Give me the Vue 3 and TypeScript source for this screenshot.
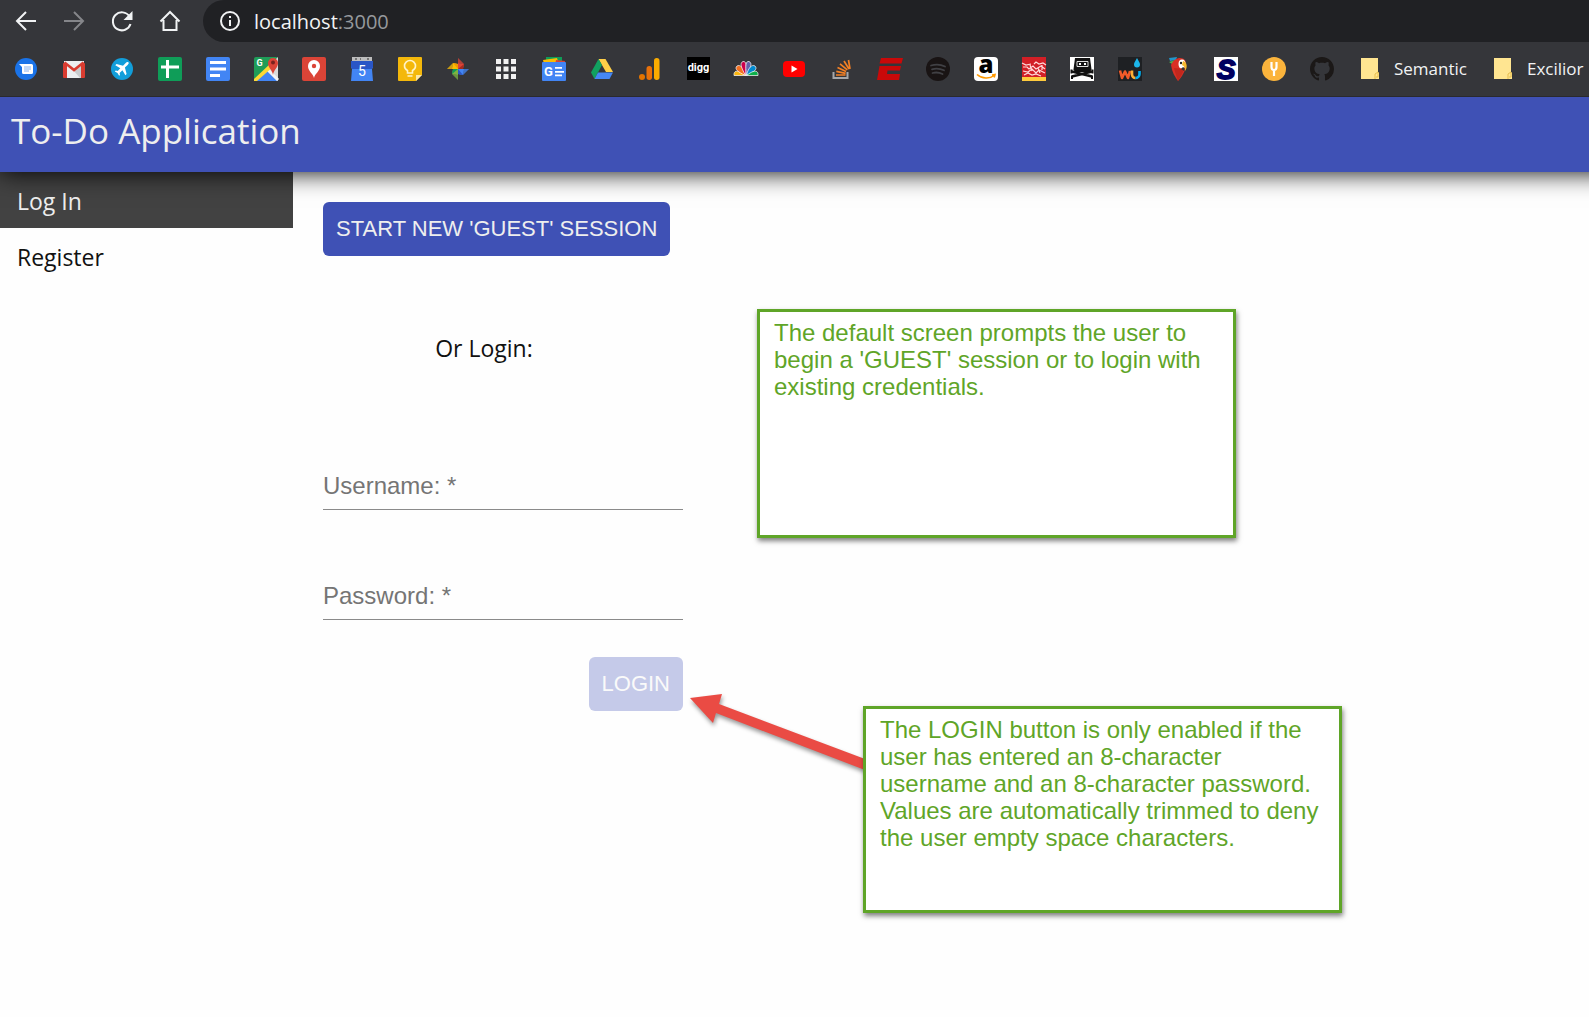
<script setup lang="ts">
import { computed, ref } from 'vue'

interface Bookmark {
  name: string
  art: string
}

const bookmarks: Bookmark[] = [
  {
    name: 'Messages',
    art: '<circle cx="12" cy="12" r="11" fill="#1a73e8"/><path d="M5 7h12.500a1.500 1.500 0 0 1 1.500 1.500v7a1.500 1.500 0 0 1-1.500 1.500h-8a1.500 1.500 0 0 1-1.500-1.500V10z" fill="#fff"/><path d="M10 10h7M10 12h7M10 14h5" stroke="#8ab4f0" stroke-width="1"/>',
  },
  {
    name: 'Gmail',
    art: '<path d="M2 4h20v17H2z" fill="#eceff1"/><path d="M12 14l9-6v13h-3z" fill="#c9ccce"/><path d="M1 6.500L3.500 5 5 7v14H2a1 1 0 0 1-1-1zM23 6.500L20.500 5 19 7v14h3a1 1 0 0 0 1-1z" fill="#d93c30"/><path d="M2.500 5.500L12 13l9.500-7.500" fill="none" stroke="#d93c30" stroke-width="2.600"/>',
  },
  {
    name: 'Flights',
    art: '<circle cx="12" cy="12" r="11" fill="#129eda"/><path d="M18.500 5.500c-.8-.8-2-.3-2.800.5l-2.700 2.700L6.500 7 5.300 8.200l5 3-2.600 2.800-2-.4-.9.900 2.700 1.600 1.600 2.700.9-.9-.4-2 2.800-2.600 3 5 1.200-1.200-1.700-6.500 2.700-2.700c.8-.8 1.600-1.900.9-2.400z" fill="#fff"/>',
  },
  {
    name: 'Sheets',
    art: '<rect width="24" height="24" rx="2" fill="#0f9d58"/><path d="M8 3h3v5.500h10v3H11V21H8v-9.500H3v-3h5z" fill="#fff"/>',
  },
  {
    name: 'Docs',
    art: '<rect width="24" height="24" rx="2" fill="#4285f4"/><path d="M4 4h16v3H4zM4 10.500h16v3H4zM4 17h10v3H4z" fill="#fff"/>',
  },
  {
    name: 'Maps',
    art: '<rect width="24" height="24" rx="2" fill="#1f9d58"/><path d="M12 12L24 0v24H12z" fill="#dadada"/><path d="M2 24l11-11 11 11z" fill="#4285f4"/><path d="M13 12l11 11" stroke="#f4f4f4" stroke-width="3"/><path d="M0 22L17 6l3 3L3 24H0z" fill="#fdd835"/><path d="M19 18c-.5-5-5-7-5-12a5 5 0 0 1 10 0c0 5-4.500 7-5 12z" fill="#db4437"/><circle cx="19" cy="5.500" r="2" fill="#7b231e"/><text x="2.500" y="9" font-family="Roboto, sans-serif" font-size="9" font-weight="700" fill="#fff">G</text>',
  },
  {
    name: 'Places',
    art: '<rect width="24" height="24" rx="2" fill="#db4437"/><path d="M12 21c-.7-4.500-6-6.500-6-12a6 6 0 0 1 12 0c0 5.500-5.300 7.500-6 12z" fill="#fff"/><circle cx="12" cy="9" r="2.200" fill="#db4437"/>',
  },
  {
    name: 'Calendar',
    art: '<path d="M2 0h20v5H2z" fill="#bdbdbd"/><path d="M5 1h2v2H5zM10 1h1v2h-1zM17 1h2v2h-2z" fill="#757575"/><path d="M1 4h22v6l-1 2 1 12H1l1-12-1-2z" fill="#4285f4"/><path d="M1 4h22v6l-1 2H2l-1-2z" fill="#2a56c6"/><text x="12" y="19" text-anchor="middle" font-family="Roboto, sans-serif" font-size="14" fill="#fff">5</text>',
  },
  {
    name: 'Keep',
    art: '<path d="M1 0h22a1 1 0 0 1 1 1v17l-6 6H1a1 1 0 0 1-1-1V1a1 1 0 0 1 1-1z" fill="#f4b80b"/><path d="M24 18h-6v6z" fill="#fce8a8"/><path d="M9.500 16v-2.500C7.500 12.500 6.500 11 6.500 9a5.500 5.500 0 0 1 11 0c0 2-1 3.500-3 4.500V16zM9.500 19h5" fill="none" stroke="#fff3c9" stroke-width="1.600"/>',
  },
  {
    name: 'Photos',
    art: '<path d="M12 1l6 6-1 5h-5z" fill="#db4437"/><path d="M23 12l-6 6-5-1v-5z" fill="#4285f4"/><path d="M12 23l-6-6 1-5h5z" fill="#7cb342"/><path d="M1 12l6-6 5 1v5z" fill="#fbbc04"/><path d="M12 12l5 0 1-5z" fill="#a52b20"/><path d="M12 12v5l5 1z" fill="#2a56c6"/><path d="M12 12H7l-1 5z" fill="#0f9d58"/><path d="M12 12V7L7 6z" fill="#f29900"/><path d="M1 12h5l1-3V6zM12 23v-5l-3-1H6zM23 12h-5l-1 3v3zM12 1v5l3 1h3z" fill="#35363a" opacity=".25"/>',
  },
  {
    name: 'Apps',
    art: '<path d="M2 2h5v5H2zM9.500 2h5v5h-5zM17 2h5v5h-5zM2 9.500h5v5H2zM9.500 9.500h5v5h-5zM17 9.500h5v5h-5zM2 17h5v5H2zM9.500 17h5v5h-5zM17 17h5v5h-5z" fill="#f1f1f1"/>',
  },
  {
    name: 'News',
    art: '<path d="M4 0h16v8H4z" fill="#0f9d58"/><path d="M1 3l14-2 2 6H2z" fill="#fbbc04"/><path d="M14 3l9 1-1 4h-9z" fill="#db4437"/><rect y="5" width="24" height="19" rx="1" fill="#4285f4"/><text x="2" y="19" font-family="Roboto, sans-serif" font-size="13" font-weight="700" fill="#fff">G</text><path d="M13 10h7v1.800h-7zM13 14h9v1.800h-9zM13 17.500h7v1.800h-7z" fill="#fff"/>',
  },
  {
    name: 'Drive',
    art: '<path d="M8.500 2h7L23 15h-7z" fill="#ffcf48"/><path d="M8.500 2l3.500 6-7.500 14L1 15.500z" fill="#11a160"/><path d="M8 15.500h15L19.500 22h-15z" fill="#4587f5"/>',
  },
  {
    name: 'Analytics',
    art: '<circle cx="4" cy="20" r="3" fill="#e37400"/><rect x="8.500" y="9" width="5.500" height="14" rx="2.700" fill="#e8710a"/><rect x="16" y="1" width="5.500" height="22" rx="2.700" fill="#f9ab00"/>',
  },
  {
    name: 'Digg',
    art: '<path d="M1 0h23v23H1z" fill="#000"/><text x="12.500" y="14" text-anchor="middle" font-family="Roboto, sans-serif" font-size="11" font-weight="700" fill="#fff">digg</text>',
  },
  {
    name: 'NBC',
    art: '<g stroke="#fff" stroke-width=".7"><path d="M11.500 18.500L0 18.500C-.5 13 4 12.500 11.500 18.500z" fill="#fcb711"/><path d="M11.500 18.500C4 15 0 12 3 9c3-2 7 2 8.500 9.500z" fill="#f37021"/><path d="M11.500 18.500C7 10 5.500 6 9 4.500c3-.5 4 3 2.500 14z" fill="#cc004c"/><path d="M12.500 18.500C17 10 18.500 6 15 4.500c-3-.5-4 3-2.500 14z" fill="#6460aa"/><path d="M12.500 18.500C20 15 24 12 21 9c-3-2-7 2-8.500 9.500z" fill="#0089d0"/><path d="M12.500 18.500L24 18.500C24.500 13 20 12.500 12.500 18.500z" fill="#0db14b"/></g>',
  },
  {
    name: 'YouTube',
    art: '<rect x="1" y="4" width="22" height="16" rx="4" fill="#f00"/><path d="M9.500 8.500l6 3.500-6 3.500z" fill="#fff"/>',
  },
  {
    name: 'Stack Overflow',
    art: '<path d="M3.500 15v6h14v-6" fill="none" stroke="#a5a7aa" stroke-width="2"/><path d="M6 18h9.500M6.300 14.300l9.300 2M7.500 10.500l8.600 4M10 6.800l7.300 6M14 4l5 8M18.500 3l1.500 9" stroke="#f48024" stroke-width="1.700"/>',
  },
  {
    name: 'Escapist',
    art: '<path d="M3 1h22l-1.500 5.500H1.500zM1.500 9H23l-1 4.500H9.500L9 17h13l-1 6H-1z" fill="#c90909"/>',
  },
  {
    name: 'Spotify',
    art: '<circle cx="12" cy="12" r="12" fill="#191414"/><path d="M5 8.500c5-1.500 10-1 14 1M6 12.300c4-1.200 8-.8 12 1M6.500 16c4-1 7-.5 10 1" fill="none" stroke="#404044" stroke-width="1.800" stroke-linecap="round"/>',
  },
  {
    name: 'Amazon',
    art: '<rect width="24" height="24" rx="4" fill="#fff"/><text x="12" y="16" text-anchor="middle" font-family="Open Sans, sans-serif" font-size="24" font-weight="800" fill="#000">a</text><path d="M3 17.500c5 4.500 13 4.500 17 1M18 18l3-.5-.8 3" fill="none" stroke="#f90" stroke-width="1.600"/>',
  },
  {
    name: 'Recipes',
    art: '<path d="M0 0h24v20H0z" fill="#d21f26"/><path d="M0 20h24v4H0z" fill="#ffcb3d"/><path d="M0 6l4 2 5-1M12 7l2-2 3 2 4-1 3 2M1 10h4l2 2 4-3 3 3 5-3 4 3M1 14l5 1 4-3 4 4 3-3 6 3M2 18l4-2 4 2 4-1 5 2M16 11l2 5M8 8l2 6M20 8v5" fill="none" stroke="#ffdada" stroke-width="1.200"/>',
  },
  {
    name: 'Pirate radio',
    art: '<path d="M0 0h24v24H0z" fill="#fff"/><path d="M5 1h15l1.500 11.500L20 15H5l-1.500-2.500z" fill="#111"/><path d="M7 4.500h11v5H7z" fill="none" stroke="#ddd" stroke-width="1"/><path d="M9 6h2v2H9zM14 6h2v2h-2z" fill="#fff"/><path d="M2 14.500l20 5M22 14.500l-20 5" stroke="#111" stroke-width="2.600"/><path d="M1.500 12.500v4M22.500 12.500v4M2 18.500v3.500M22 18.500v3.500" stroke="#111" stroke-width="2"/>',
  },
  {
    name: 'Weather Underground',
    art: '<path d="M0 0h24v24H0z" fill="#1e2023"/><path d="M2 13.500l2 7.500 3-6.500 3 6.500 2-7" fill="none" stroke="#f15a29" stroke-width="2.600" stroke-linejoin="round"/><path d="M14 13.500v4a3.500 3.500 0 0 0 3.500 3.500" fill="none" stroke="#fbb034" stroke-width="2.600"/><path d="M17.500 21a4 4 0 0 0 4-4v-3" fill="none" stroke="#00aeef" stroke-width="2.600"/><path d="M19 1c1.500 3 3 4.500 3 6.500a3 3 0 0 1-6 0C16 5.500 17.500 4 19 1z" fill="#1cb5ea"/>',
  },
  {
    name: 'Parrot',
    art: '<path d="M3 1l8-1-1 3-6 1z" fill="#2196c9"/><path d="M3 5l6-2v4L6 7z" fill="#4caf50"/><path d="M5 8C8 0 17-1 19.500 4c2 6-2 14-7.500 20-3-4-6-9-7-16z" fill="#d93025"/><path d="M8 11c1 5 3 9 4 13 3-5 5-8 6-12z" fill="#c2271d"/><ellipse cx="16" cy="7" rx="3.500" ry="4.500" fill="#fff"/><circle cx="15" cy="6" r="1.200" fill="#222"/><path d="M17 4c4 1 5 6 2 10 0-4-1-5-3-6z" fill="#f5b82e"/><path d="M17 10c2 1 2 2 1 4l-3-2z" fill="#333"/>',
  },
  {
    name: 'Slashdot',
    art: '<path d="M0 0h24v24H0z" fill="#fff"/><text x="12" y="22" text-anchor="middle" font-family="Liberation Sans, sans-serif" font-size="28" font-style="italic" font-weight="700" fill="#000060" stroke="#000060" stroke-width="1.800">S</text>',
  },
  {
    name: 'Tuning fork',
    art: '<circle cx="12" cy="12" r="12" fill="#fbb43c"/><path d="M9.500 5v5a2.500 3 0 0 0 5 0V5M12 12.500V19" fill="none" stroke="#fff" stroke-width="2.200"/>',
  },
  {
    name: 'GitHub',
    art: '<path d="M12 0C5.370 0 0 5.370 0 12c0 5.310 3.435 9.795 8.205 11.385.6.105.825-.255.825-.57 0-.285-.015-1.230-.015-2.235-3.015.555-3.795-.735-4.035-1.410-.135-.345-.72-1.410-1.230-1.695-.42-.225-1.020-.78-.015-.795.945-.015 1.620.87 1.845 1.230 1.080 1.815 2.805 1.305 3.495.99.105-.78.42-1.305.765-1.605-2.670-.3-5.460-1.335-5.460-5.925 0-1.305.465-2.385 1.230-3.225-.12-.3-.54-1.530.12-3.180 0 0 1.005-.315 3.300 1.230.96-.27 1.980-.405 3-.405s2.040.135 3 .405c2.295-1.560 3.300-1.230 3.300-1.230.66 1.650.24 2.880.12 3.180.765.84 1.230 1.905 1.230 3.225 0 4.605-2.805 5.625-5.475 5.925.435.375.81 1.095.81 2.220 0 1.605-.015 2.895-.015 3.300 0 .315.225.69.825.57A12.020 12.020 0 0 0 24 12c0-6.630-5.370-12-12-12z" fill="#1b1817"/>',
  },
]

const folders = ['Semantic', 'Excilior']

const username = ref('')
const password = ref('')
const canLogin = computed(
  () => username.value.trim().length >= 8 && password.value.trim().length >= 8,
)
</script>

<template>
  <div class="page">
    <div class="browser">
      <div class="toolbar">
        <div class="nav-buttons">
          <button type="button" aria-label="Back">
            <svg viewBox="0 0 24 24"><path d="M22 12H3M12 3l-9 9 9 9" /></svg>
          </button>
          <button type="button" aria-label="Forward" class="dim">
            <svg viewBox="0 0 24 24"><path d="M2 12h19M12 3l9 9-9 9" /></svg>
          </button>
          <button type="button" aria-label="Reload">
            <svg viewBox="0 0 24 24">
              <path d="M19.500 7.500A9 9 0 1 0 20.500 15" />
              <path d="M22.500 2v9h-9z" class="solid" />
            </svg>
          </button>
          <button type="button" aria-label="Home">
            <svg viewBox="0 0 24 24"><path d="M2.500 12.500L12 3l9.500 9.500M5.500 11v10h13V11" /></svg>
          </button>
        </div>
        <div class="omnibox">
          <svg viewBox="0 0 24 24" aria-hidden="true">
            <circle cx="12" cy="12" r="9" />
            <path d="M12 11v6M12 7v2" />
          </svg>
          <span>localhost<span class="port">:3000</span></span>
        </div>
      </div>
      <nav class="bookmarks" aria-label="Bookmarks">
        <a v-for="b in bookmarks" :key="b.name" href="#" :aria-label="b.name">
          <svg viewBox="0 0 24 24" v-html="b.art"></svg>
        </a>
        <a v-for="f in folders" :key="f" href="#" class="folder">
          <svg viewBox="0 0 24 24" aria-hidden="true">
            <path d="M3 1h17v14l1 1v6H3z" fill="#ffe591" />
            <path d="M17 22v-5l3-2v5h-2" fill="none" stroke="#e6bd4d" stroke-width="1" />
          </svg>
          <span>{{ f }}</span>
        </a>
      </nav>
    </div>

    <header class="app-bar">
      <h1>To-Do Application</h1>
    </header>

    <div class="body">
      <nav class="side" aria-label="Account">
        <a href="#" class="active">Log In</a>
        <a href="#">Register</a>
      </nav>

      <main>
        <button type="button" class="btn">START NEW 'GUEST' SESSION</button>
        <form @submit.prevent>
          <h2>Or Login:</h2>
          <div class="field">
            <label for="username" :class="{ hidden: username }">Username: *</label>
            <input id="username" v-model="username" type="text" required />
          </div>
          <div class="field">
            <label for="password" :class="{ hidden: password }">Password: *</label>
            <input id="password" v-model="password" type="password" required />
          </div>
          <button type="submit" class="btn login" :disabled="!canLogin">LOGIN</button>
        </form>
      </main>
    </div>

    <svg class="arrow" viewBox="0 0 180 90" aria-hidden="true">
      <path d="M5 12L37 8 34 18 180 73V84L31 27 28 37z" />
    </svg>
    <p class="note note-session">
      The default screen prompts the user to begin a 'GUEST' session or to login with existing
      credentials.
    </p>
    <p class="note note-login">
      The LOGIN button is only enabled if the user has entered an 8-character username and an
      8-character password. Values are automatically trimmed to deny the user empty space
      characters.
    </p>
  </div>
</template>

<style>
body {
  margin: 0;
  background: #fff;
}
</style>

<style scoped>
.page {
  position: relative;
  min-height: 100vh;
  overflow-x: hidden;
  background: #fefefe;
  font-family: 'Open Sans', 'Noto Sans', sans-serif;
  font-size: 23px;
  color: #111;
}

a {
  color: inherit;
  text-decoration: none;
}

svg {
  display: block;
  flex: none;
}

.browser {
  background: #35363a;
  border-bottom: 1px solid #2a2a2e;
  color: #f1f3f4;
}

.toolbar {
  display: flex;
  height: 42px;
}

.nav-buttons {
  display: flex;
  gap: 24px;
  align-items: center;
  padding: 0 21px 0 14px;
}

.nav-buttons button {
  padding: 0;
  border: 0;
  background: none;
}

.nav-buttons svg,
.omnibox svg {
  width: 24px;
  height: 24px;
  fill: none;
  stroke: #f1f3f4;
  stroke-width: 2;
}

.nav-buttons .dim svg {
  stroke: #85868a;
}

.nav-buttons .solid {
  fill: #f1f3f4;
  stroke: none;
}

.omnibox {
  display: flex;
  flex: 1;
  gap: 12px;
  align-items: center;
  padding-left: 15px;
  border-radius: 21px 0 0 21px;
  background: #202124;
  font-size: 20px;
}

.port {
  color: #96999d;
}

.bookmarks {
  display: flex;
  gap: 24px;
  align-items: center;
  height: 54px;
  padding-left: 14px;
  font-size: 17px;
}

.bookmarks svg {
  width: 24px;
  height: 24px;
  overflow: visible;
}

.folder {
  display: flex;
  gap: 12px;
  align-items: center;
}

.folder span {
  padding-bottom: 2px;
}

/* The bar runs past the right edge so that its shadow fades on the left only. */
.app-bar {
  position: relative;
  display: flex;
  align-items: center;
  height: 75px;
  margin-right: -30px;
  padding: 0 11px;
  box-sizing: border-box;
  background: #3f51b5;
  box-shadow: 0 0 24px #000;
  clip-path: inset(0 0 -60px 0);
  color: #eee;
}

h1 {
  margin: 0;
  padding-bottom: 8px;
  font-size: 35px;
  font-weight: 400;
  line-height: 48px;
}

.body {
  display: flex;
}

.side {
  display: flex;
  flex: 0 0 293px;
  flex-direction: column;
}

.side a {
  padding: 13px 17px 11px;
  line-height: 32px;
}

.side .active {
  background: #424242;
  color: #eee;
}

main {
  flex: 1;
  padding: 30px;
}

.btn {
  height: 54px;
  padding: 0 13px;
  border: 0;
  border-radius: 6px;
  background: #3f51b5;
  color: #eee;
  font-family: 'Liberation Sans', Arial, sans-serif;
  font-size: 22px;
}

.btn:disabled {
  background: #c5cae9;
  color: #fafafa;
}

form {
  display: flex;
  flex-direction: column;
  width: 360px;
}

h2 {
  margin: 76px 38px 98px 0;
  font-size: 23px;
  font-weight: 400;
  line-height: 32px;
  text-align: center;
}

.field {
  display: grid;
  height: 48px;
  margin-bottom: 62px;
  box-sizing: border-box;
  border-bottom: 1px solid #8a8a8a;
  font-family: 'Liberation Sans', Arial, sans-serif;
  font-size: 24px;
}

.field + .field {
  margin-bottom: 37px;
}

.field label,
.field input {
  grid-area: 1 / 1;
  line-height: 47px;
}

.field label {
  color: #757575;
  pointer-events: none;
}

.field input {
  min-width: 0;
  padding: 0;
  border: 0;
  outline: 0;
  background: none;
  font: inherit;
}

.hidden {
  visibility: hidden;
}

.login {
  align-self: flex-end;
}

.note {
  position: absolute;
  width: 479px;
  margin: 0;
  padding: 7px 14px;
  box-sizing: border-box;
  border: 3px solid #5fa528;
  background: #fff;
  box-shadow: 1px 3px 5px rgba(0, 0, 0, 0.5);
  color: #5fa528;
  font-family: 'Liberation Sans', Arial, sans-serif;
  font-size: 24px;
  line-height: 27px;
}

.note-session {
  top: 309px;
  left: 757px;
  height: 229px;
}

.note-login {
  top: 706px;
  left: 863px;
  height: 207px;
}

.arrow {
  position: absolute;
  top: 686px;
  left: 685px;
  width: 180px;
  height: 90px;
  overflow: visible;
  fill: #ea4b44;
  filter: drop-shadow(1px 3px 2px rgba(0, 0, 0, 0.4));
}
</style>
